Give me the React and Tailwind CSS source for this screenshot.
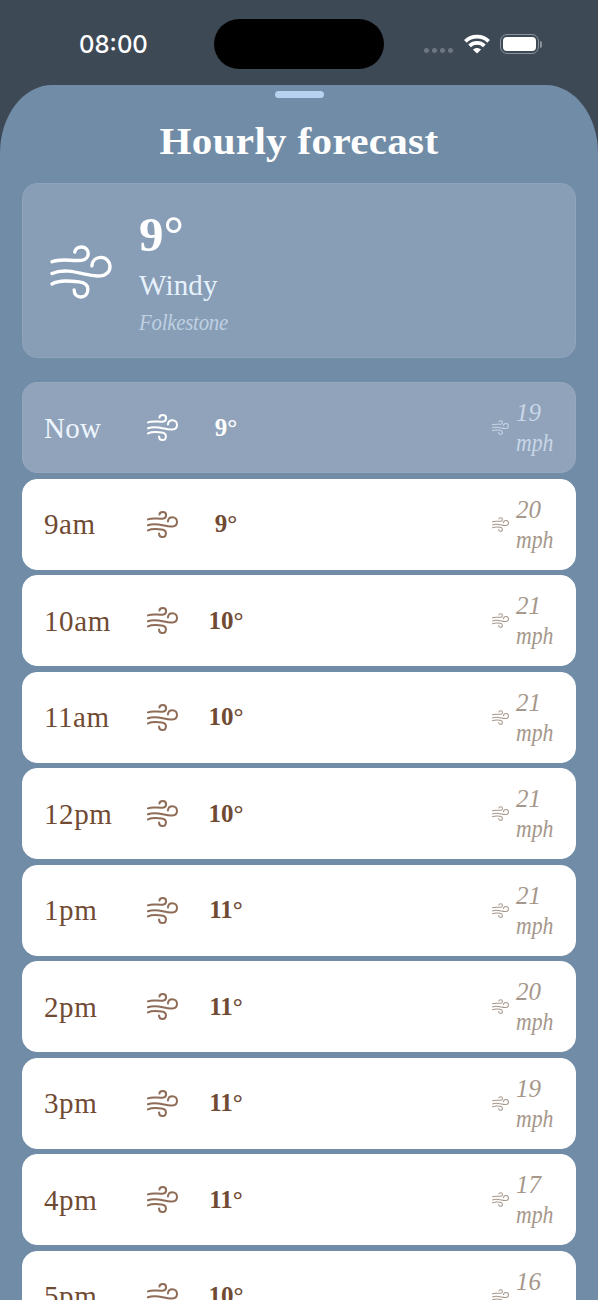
const hours = [
    { time: "Now", temp: "9°", wind: 19, current: true },
    { time: "9am", temp: "9°", wind: 20 },
    { time: "10am", temp: "10°", wind: 21 },
    { time: "11am", temp: "10°", wind: 21 },
    { time: "12pm", temp: "10°", wind: 21 },
    { time: "1pm", temp: "11°", wind: 21 },
    { time: "2pm", temp: "11°", wind: 20 },
    { time: "3pm", temp: "11°", wind: 19 },
    { time: "4pm", temp: "11°", wind: 17 },
    { time: "5pm", temp: "10°", wind: 16 },
];

function WindIcon({ className, strokeWidth = 10 }) {
    return (
        <svg
            viewBox="91 192 185 161"
            className={className}
            fill="none"
            stroke="currentColor"
            strokeWidth={strokeWidth}
            strokeLinecap="round"
        >
            <path d="M97 242C125 231 150 240 184 238C197 237 205 228 205 217C205 206 196 198 185 198C174 198 166 204 165 213" />
            <path d="M97 277C130 263 165 272 195 279C215 284 230 285 242 284C258 283 270 272 270 257C270 241 258 229 243 229C228 229 217 239 216 254" />
            <path d="M97 308C120 296 150 299 178 302C194 304 204 312 204 324C204 338 195 347 183 347C172 347 163 339 163 326" />
        </svg>
    );
}

function StatusBar() {
    return (
        <div className="flex h-[84.5px] items-start text-white">
            <div className="mt-[29px] w-[214px] pl-[79px] font-['Inter','Liberation_Sans',sans-serif] text-[24px] leading-8 font-medium">
                08:00
            </div>
            <div className="mt-[19px] h-[50px] w-[170px] rounded-full bg-black" />
            <div className="mt-[33px] ml-10 flex h-[22px] items-center">
                <div className="mt-3 flex gap-[3px]">
                    <span className="size-[5px] rounded-full bg-[#6d7580]" />
                    <span className="size-[5px] rounded-full bg-[#6d7580]" />
                    <span className="size-[5px] rounded-full bg-[#6d7580]" />
                    <span className="size-[5px] rounded-full bg-[#6d7580]" />
                </div>
                <svg
                    viewBox="0 0 26 20"
                    className="ml-[11px] h-5 w-[26px]"
                    fill="none"
                    stroke="currentColor"
                >
                    <path
                        d="M1.4 7.4C7.6 1.1 18.4 1.1 24.6 7.4"
                        strokeWidth="3.8"
                    />
                    <path
                        d="M5.6 11.8C9.7 7.9 16.3 7.9 20.4 11.8"
                        strokeWidth="3.8"
                    />
                    <path
                        d="M13 19.6L8.9 15.6C11.2 13.3 14.8 13.3 17.1 15.6Z"
                        fill="currentColor"
                        stroke="none"
                    />
                </svg>
                <div className="ml-2.5 flex h-5 w-[39px] rounded-[7px] border-[1.5px] border-[#8b929b] p-[2px]">
                    <div className="flex-1 rounded-[4px] bg-white" />
                </div>
                <div className="ml-px h-[7px] w-[2px] rounded-r-full bg-[#8b929b]" />
            </div>
        </div>
    );
}

function CurrentCard() {
    return (
        <div className="mt-[21px] flex h-[175px] items-center rounded-[15px] border border-[#8fa4bb] bg-[#889eb6] pl-[27px] text-white">
            <WindIcon className="mt-0.5 h-[54px] w-[62px]" />
            <div className="ml-[27px]">
                <div className="flex h-[64px] items-center text-[49px] leading-none font-bold">
                    9<span className="text-[51px]">°</span>
                </div>
                <div className="-mt-px h-10 text-[29px] leading-10 tracking-[0.2px] text-[#e7f1fc]">
                    Windy
                </div>
                <div className="h-[34px] w-fit origin-left scale-x-87 text-[24px] leading-[34px] tracking-[-0.3px] text-[#bfd0e2] italic">
                    Folkestone
                </div>
            </div>
        </div>
    );
}

function HourRow({ hour }) {
    return (
        <div
            className={
                hour.current
                    ? "flex h-[91px] shrink-0 items-center rounded-[15px] border border-[#96a8be] bg-[#91a3ba] px-[21px] text-white"
                    : "flex h-[91px] shrink-0 items-center rounded-[15px] border border-white bg-white px-[21px] text-[#704a32]"
            }
        >
            <div
                className={
                    hour.current
                        ? "mt-0.5 w-[103px] text-[29px] tracking-[0.3px] text-[#edf5ff]"
                        : "mt-0.5 w-[103px] text-[29px] tracking-[0.6px]"
                }
            >
                {hour.time}
            </div>
            <WindIcon
                strokeWidth={12}
                className={
                    hour.current
                        ? "h-[27px] w-[31px]"
                        : "h-[27px] w-[31px] text-[#8e6c57]"
                }
            />
            <div className="ml-[18px] w-[60px] text-center text-[25px] font-bold">
                {hour.temp}
            </div>
            <div
                className={
                    hour.current
                        ? "ml-auto flex items-center text-[#c8d7e8]"
                        : "ml-auto flex items-center text-[#a6978b]"
                }
            >
                <WindIcon strokeWidth={11} className="h-[15px] w-[17px]" />
                <div className="mt-px ml-[7px] w-[38px] text-[25px] leading-[30px] italic">
                    {hour.wind}{" "}
                    <span className="block w-fit origin-left scale-x-87">
                        mph
                    </span>
                </div>
            </div>
        </div>
    );
}

export default function App() {
    return (
        <div className="flex h-[1300px] w-[598px] flex-col overflow-hidden bg-[#3e4956] font-['Baskerville','Liberation_Serif',serif]">
            <StatusBar />
            <div className="min-h-0 flex-1 overflow-hidden rounded-t-[52px_68px] bg-[#718ca6] px-[22px]">
                <div className="mx-auto mt-[6.5px] h-[7px] w-[49px] rounded-full bg-[#b7d2f0]" />
                <h1 className="mt-[22px] h-[42px] scale-x-108 text-center text-[38px] leading-[42px] font-bold tracking-[0.3px] whitespace-nowrap text-white">
                    Hourly forecast
                </h1>
                <CurrentCard />
                <div className="mt-6 flex flex-col gap-[5.5px]">
                    {hours.map((hour) => (
                        <HourRow key={hour.time} hour={hour} />
                    ))}
                </div>
            </div>
        </div>
    );
}
